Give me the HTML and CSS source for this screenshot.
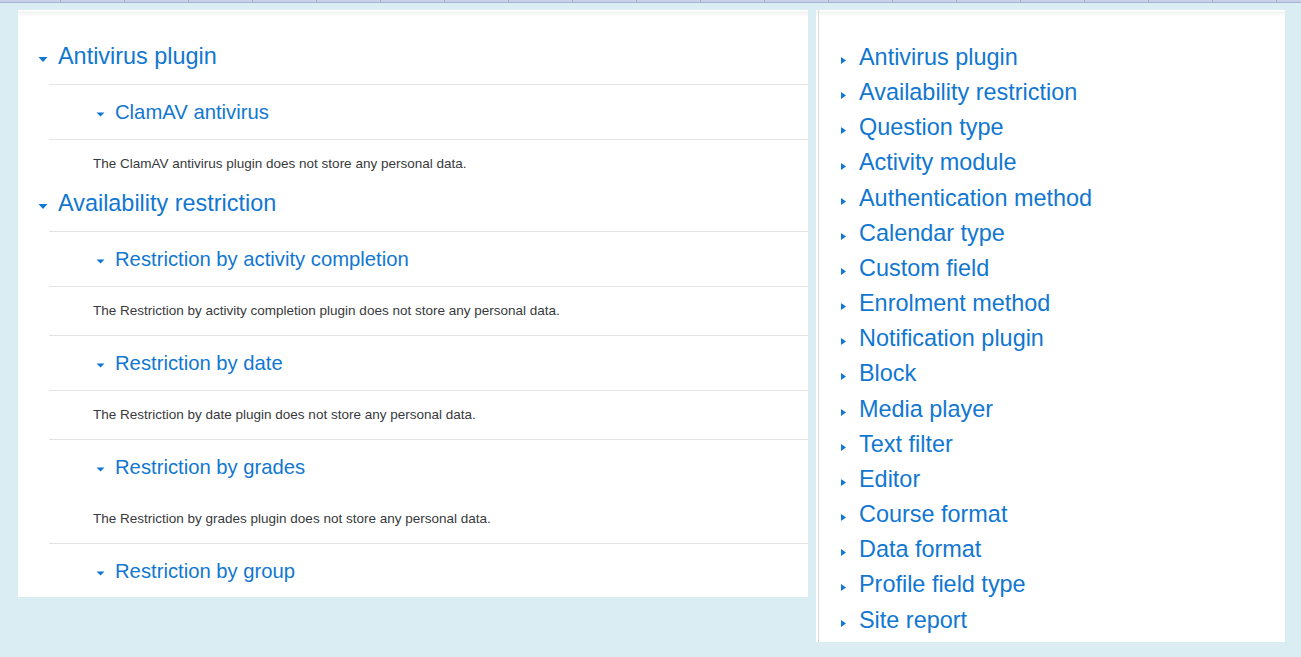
FILE: index.html
```html
<!DOCTYPE html>
<html lang="en">
<head>
<meta charset="utf-8">
<title>Privacy registry</title>
<link rel="stylesheet" href="styles.css">
</head>
<body>
<div class="ruler"></div>
<div class="page">
  <main class="card main">
    <section class="component">
      <h3 class="comp-title"><svg class="caret-down" width="10" height="5" viewBox="0 0 10 5"><polygon points="0.5,0 9.5,0 5,5"/></svg>Antivirus plugin</h3>
      <div class="plugins">
        <h4 class="plugin-title"><svg class="caret-sm" width="9" height="5" viewBox="0 0 9 5"><polygon points="0.5,0.5 8.5,0.5 4.5,4.5"/></svg>ClamAV antivirus</h4>
        <p class="plugin-text">The ClamAV antivirus plugin does not store any personal data.</p>
      </div>
    </section>
    <section class="component">
      <h3 class="comp-title"><svg class="caret-down" width="10" height="5" viewBox="0 0 10 5"><polygon points="0.5,0 9.5,0 5,5"/></svg>Availability restriction</h3>
      <div class="plugins">
        <h4 class="plugin-title"><svg class="caret-sm" width="9" height="5" viewBox="0 0 9 5"><polygon points="0.5,0.5 8.5,0.5 4.5,4.5"/></svg>Restriction by activity completion</h4>
        <p class="plugin-text">The Restriction by activity completion plugin does not store any personal data.</p>
        <h4 class="plugin-title"><svg class="caret-sm" width="9" height="5" viewBox="0 0 9 5"><polygon points="0.5,0.5 8.5,0.5 4.5,4.5"/></svg>Restriction by date</h4>
        <p class="plugin-text">The Restriction by date plugin does not store any personal data.</p>
        <h4 class="plugin-title"><svg class="caret-sm" width="9" height="5" viewBox="0 0 9 5"><polygon points="0.5,0.5 8.5,0.5 4.5,4.5"/></svg>Restriction by grades</h4>
        <p class="plugin-text no-rule">The Restriction by grades plugin does not store any personal data.</p>
        <h4 class="plugin-title last"><svg class="caret-sm" width="9" height="5" viewBox="0 0 9 5"><polygon points="0.5,0.5 8.5,0.5 4.5,4.5"/></svg>Restriction by group</h4>
      </div>
    </section>
  </main>
  <aside class="card nav">
    <ul class="nav-list">
      <li><svg class="caret-right" width="5" height="7" viewBox="0 0 5 7"><polygon points="0,0 5,3.5 0,7"/></svg>Antivirus plugin</li>
      <li><svg class="caret-right" width="5" height="7" viewBox="0 0 5 7"><polygon points="0,0 5,3.5 0,7"/></svg>Availability restriction</li>
      <li><svg class="caret-right" width="5" height="7" viewBox="0 0 5 7"><polygon points="0,0 5,3.5 0,7"/></svg>Question type</li>
      <li><svg class="caret-right" width="5" height="7" viewBox="0 0 5 7"><polygon points="0,0 5,3.5 0,7"/></svg>Activity module</li>
      <li><svg class="caret-right" width="5" height="7" viewBox="0 0 5 7"><polygon points="0,0 5,3.5 0,7"/></svg>Authentication method</li>
      <li><svg class="caret-right" width="5" height="7" viewBox="0 0 5 7"><polygon points="0,0 5,3.5 0,7"/></svg>Calendar type</li>
      <li><svg class="caret-right" width="5" height="7" viewBox="0 0 5 7"><polygon points="0,0 5,3.5 0,7"/></svg>Custom field</li>
      <li><svg class="caret-right" width="5" height="7" viewBox="0 0 5 7"><polygon points="0,0 5,3.5 0,7"/></svg>Enrolment method</li>
      <li><svg class="caret-right" width="5" height="7" viewBox="0 0 5 7"><polygon points="0,0 5,3.5 0,7"/></svg>Notification plugin</li>
      <li><svg class="caret-right" width="5" height="7" viewBox="0 0 5 7"><polygon points="0,0 5,3.5 0,7"/></svg>Block</li>
      <li><svg class="caret-right" width="5" height="7" viewBox="0 0 5 7"><polygon points="0,0 5,3.5 0,7"/></svg>Media player</li>
      <li><svg class="caret-right" width="5" height="7" viewBox="0 0 5 7"><polygon points="0,0 5,3.5 0,7"/></svg>Text filter</li>
      <li><svg class="caret-right" width="5" height="7" viewBox="0 0 5 7"><polygon points="0,0 5,3.5 0,7"/></svg>Editor</li>
      <li><svg class="caret-right" width="5" height="7" viewBox="0 0 5 7"><polygon points="0,0 5,3.5 0,7"/></svg>Course format</li>
      <li><svg class="caret-right" width="5" height="7" viewBox="0 0 5 7"><polygon points="0,0 5,3.5 0,7"/></svg>Data format</li>
      <li><svg class="caret-right" width="5" height="7" viewBox="0 0 5 7"><polygon points="0,0 5,3.5 0,7"/></svg>Profile field type</li>
      <li><svg class="caret-right" width="5" height="7" viewBox="0 0 5 7"><polygon points="0,0 5,3.5 0,7"/></svg>Site report</li>
    </ul>
  </aside>
</div>
</body>
</html>
```
FILE: styles.css
```css
html, body {
  margin: 0;
  padding: 0;
}
body {
  background: #daedf3;
  font-family: "Liberation Sans", Arial, sans-serif;
  color: #373a3c;
  width: 1301px;
  height: 657px;
  overflow: hidden;
}
.ruler {
  height: 2px;
  background-color: #c8d0e9;
  background-image: repeating-linear-gradient(to right, transparent 0, transparent 60px, #a7b2d3 60px, #a7b2d3 61px, transparent 61px, transparent 64px);
  border-bottom: 1px solid #a9b4d5;
}
.page {
  display: flex;
  align-items: flex-start;
  gap: 8px;
  padding: 7px 0 0 18px;
}
.card {
  background: #fff linear-gradient(#ffffff 0, #ffffff 1px, #f2f2f2 2px, #ffffff 7px) no-repeat top / 100% 8px;
  box-sizing: border-box;
}
.main {
  width: 790px;
  padding: 32px 0 0 20px;
}
.component + .component {
  margin-top: 1px;
}
.comp-title {
  display: flex;
  align-items: center;
  margin: 0 0 14px;
  font-size: 23.4375px;
  line-height: 28px;
  font-weight: 400;
  color: #1177d1;
}
.caret-down {
  fill: #1177d1;
  margin: 7px 10px 0 0;
  flex: none;
}
.plugins {
  margin-left: 11px;
}
.plugin-title {
  display: flex;
  align-items: center;
  margin: 0;
  padding: 15px 0 15px 47px;
  border-top: 1px solid #e3e3e3;
  font-size: 20.25px;
  line-height: 24px;
  font-weight: 400;
  color: #1177d1;
}
.plugin-title.last {
  padding-bottom: 14px;
}
.caret-sm {
  fill: #1177d1;
  margin: 5px 10px 0 0;
  flex: none;
}
.plugin-text {
  margin: 0;
  padding: 14px 0 14px 44px;
  border-top: 1px solid #e3e3e3;
  font-size: 13.5px;
  line-height: 20px;
}
.plugin-text.no-rule {
  border-top-color: transparent;
}
.nav {
  width: 469px;
  padding: 0 0 0 2px;
}
.nav-list {
  list-style: none;
  margin: 0;
  padding: 30px 0 4px 22px;
  border-left: 1px solid #dadada;
}
.nav-list li {
  display: flex;
  align-items: center;
  font-size: 23.4375px;
  line-height: 35.16px;
  color: #1177d1;
}
.caret-right {
  fill: #1177d1;
  margin: 6px 13px 0 0;
  flex: none;
}
```
